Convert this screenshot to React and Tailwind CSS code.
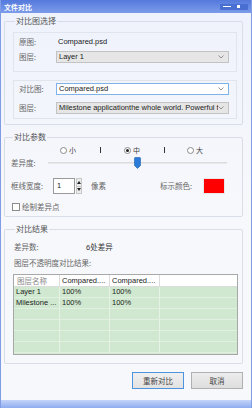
import React from 'react'

const cjk = { fontFamily: '"Noto Sans CJK SC", "Liberation Sans", sans-serif' }
const lat = { fontFamily: '"Liberation Sans", "Noto Sans CJK SC", sans-serif' }

const Chevron = () => (
    <svg width="6" height="4" viewBox="0 0 6 4" className="shrink-0">
        <path d="M0.5 0.5 L3 3 L5.5 0.5" fill="none" stroke="#7a7a7a" strokeWidth="0.8" />
    </svg>
)

const Select = ({ value, focused }) => (
    <div className={'flex-1 min-w-0 h-[12px] flex items-center pl-[2px] pr-[4px] border text-[7.5px] text-[#222] overflow-hidden ' +
        (focused ? 'bg-white border-[#7fb3e8]' : 'bg-[#e6e6e6] border-[#c3c3c3]')}
        style={lat}>
        <span className="flex-1 min-w-0 whitespace-nowrap overflow-hidden">{value}</span>
        <Chevron />
    </div>
)

const Radio = ({ checked, label }) => (
    <div className="flex items-center w-[41px]">
        <div className="w-[7px] h-[7px] rounded-full border border-[#8a8a8a] bg-white flex items-center justify-center">
            {checked && <div className="w-[3px] h-[3px] rounded-full bg-[#222]" />}
        </div>
        <span className="ml-[2px] text-[7px] leading-[10px] text-[#444]">{label}</span>
    </div>
)

const Thumb = () => (
    <svg width="7" height="12" viewBox="0 0 7 12">
        <path d="M0.5 1.3 Q0.5 0.5 1.3 0.5 H5.7 Q6.5 0.5 6.5 1.3 V8.5 L3.5 11.5 L0.5 8.5 Z" fill="#2b7bd8" stroke="#1d5fb0" strokeWidth="0.6" />
    </svg>
)

const rows = [
    ['Layer 1', '100%', '100%'],
    ['Milestone ...', '100%', '100%'],
    ['', '', ''], ['', '', ''], ['', '', ''], ['', '', ''],
]

export default function App() {
    return (
        <div className="w-[252px] h-[408px] flex flex-col overflow-hidden border-x border-[#7f9de6] bg-gradient-to-b from-[#eef2fc] via-[#f7f8fc] to-[#f7f8fc]" style={cjk}>
            {/* title bar */}
            <div className="h-[13px] shrink-0 flex items-center px-[3px] bg-gradient-to-b from-[#5479dc] to-[#7c9be9]">
                <span className="text-[7px] leading-[8px] text-white font-bold">文件对比</span>
                <div className="ml-auto flex items-center h-[6px] w-[28px] bg-[#4a6fd3] rounded-[1px] px-[3px] gap-[6px]">
                    <div className="w-[8px] h-[1px] bg-white" />
                    <div className="w-[3px] h-[3px] bg-white" />
                </div>
            </div>

            {/* 对比图选择 */}
            <fieldset className="mt-[3px] ml-[3px] w-[239px] min-w-0 border border-[#d8dde7] rounded-[2px] pl-[8px] pr-[5px] pb-[5px]">
                <legend className="ml-[2px] px-[1px] text-[8px] leading-[10px] text-[#555]">对比图选择</legend>
                <div className="mt-[6px] h-[40px] border border-[#e0e4ec] pl-[5px] pr-[7px] flex flex-col">
                    <div className="mt-[2px] h-[14px] flex items-center">
                        <span className="w-[37px] text-[7.5px] text-[#666]">原图:</span>
                        <span className="text-[7.5px] text-[#222] ml-[2px]" style={lat}>Compared.psd</span>
                    </div>
                    <div className="mt-[2px] h-[12px] flex items-center">
                        <span className="w-[37px] text-[7.5px] text-[#666]">图层:</span>
                        <Select value="Layer 1" />
                    </div>
                </div>
                <div className="mt-[8px] h-[39px] border border-[#e0e4ec] pl-[5px] pr-[7px] flex flex-col">
                    <div className="mt-[2px] h-[12px] flex items-center">
                        <span className="w-[37px] text-[7.5px] text-[#666]">对比图:</span>
                        <Select value="Compared.psd" focused />
                    </div>
                    <div className="mt-[7px] h-[12px] flex items-center">
                        <span className="w-[37px] text-[7.5px] text-[#666]">图层:</span>
                        <Select value="Milestone applicationthe whole world. Powerful f" />
                    </div>
                </div>
            </fieldset>

            {/* 对比参数 */}
            <fieldset className="mt-[7px] ml-[3px] w-[239px] min-w-0 border border-[#d8dde7] rounded-[2px] pl-[6px] pr-[15px] pb-[4px]">
                <legend className="ml-[2px] px-[1px] text-[8px] leading-[10px] text-[#555]">对比参数</legend>
                <div className="mt-[3px] h-[10px] flex items-center pl-[49px]">
                    <Radio label="小" />
                    <div className="w-[1px] h-[6px] bg-[#333] mr-[23px]" />
                    <Radio label="中" checked />
                    <div className="w-[1px] h-[6px] bg-[#333] mr-[22px]" />
                    <Radio label="大" />
                </div>
                <div className="mt-[2px] h-[12px] flex items-center">
                    <span className="w-[37px] text-[7.5px] text-[#666]">差异度:</span>
                    <div className="relative flex-1 h-[12px] flex items-center">
                        <div className="w-full h-[2px] bg-[#dcdcdc] border-b border-[#e8e8e8]" />
                        <div className="absolute left-[86px] top-0">
                            <Thumb />
                        </div>
                    </div>
                </div>
                <div className="mt-[9px] h-[16px] flex items-center">
                    <span className="w-[42px] text-[7.5px] text-[#666]">框线宽度:</span>
                    <div className="w-[22px] h-[16px] bg-white border border-[#9a9a9a] flex items-center pl-[3px] text-[7.5px] text-[#222]" style={lat}>1</div>
                    <div className="w-[6px] h-[16px] flex flex-col ml-[1px]">
                        <div className="flex-1 flex items-center justify-center bg-[#ececec] border border-[#c8c8c8]">
                            <svg width="4" height="3" viewBox="0 0 4 3"><path d="M0 3 L2 0 L4 3 Z" fill="#222" /></svg>
                        </div>
                        <div className="flex-1 flex items-center justify-center bg-[#ececec] border border-[#c8c8c8] border-t-0">
                            <svg width="4" height="3" viewBox="0 0 4 3"><path d="M0 0 L2 3 L4 0 Z" fill="#222" /></svg>
                        </div>
                    </div>
                    <span className="ml-[9px] text-[7.5px] text-[#666]">像素</span>
                    <span className="ml-[54px] w-[43px] text-[7.5px] text-[#666]">标示颜色:</span>
                    <div className="w-[22px] h-[16px] bg-[#ff0000] border border-[#e8e8e8]" />
                </div>
                <div className="mt-[8px] h-[10px] flex items-center">
                    <div className="ml-[1px] w-[8px] h-[8px] bg-white border border-[#8a8a8a]" />
                    <span className="ml-[2px] text-[7.5px] text-[#666]">绘制差异点</span>
                </div>
            </fieldset>

            {/* 对比结果 */}
            <fieldset className="mt-[7px] ml-[3px] w-[239px] min-w-0 border border-[#d8dde7] rounded-[2px] pl-[8px] pr-[4px] pb-[8px]">
                <legend className="ml-[2px] px-[1px] text-[8px] leading-[10px] text-[#555]">对比结果</legend>
                <div className="mt-[8px] h-[10px] flex items-center pl-[1px]">
                    <span className="w-[72px] text-[7.5px] text-[#666]">差异数:</span>
                    <span className="text-[7.5px] text-[#333]"><span style={lat}>6</span>处差异</span>
                </div>
                <div className="mt-[6px] h-[10px] flex items-center pl-[1px]">
                    <span className="text-[7.5px] text-[#666]">图层不透明度对比结果:</span>
                </div>
                <div className="mt-[6px] h-[81px] border border-[#a8a8a8] bg-[#cfe8cf] overflow-hidden flex flex-col" style={lat}>
                    <div className="h-[12px] shrink-0 bg-white flex text-[7.5px] text-[#222] border-b border-[#dcdcdc]">
                        <div className="w-[46px] pl-[3px] flex items-center border-r border-[#dcdcdc] text-[#888]" style={cjk}>图层名称</div>
                        <div className="w-[50px] pl-[2px] flex items-center border-r border-[#dcdcdc] whitespace-nowrap overflow-hidden">Compared....</div>
                        <div className="w-[50px] pl-[2px] flex items-center border-r border-[#dcdcdc] whitespace-nowrap overflow-hidden">Compared....</div>
                        <div className="flex-1" />
                    </div>
                    {rows.map((r, i) => (
                        <div key={i} className="h-[11px] shrink-0 flex text-[7.5px] text-[#222] border-b border-[#e2f0e2]">
                            <div className="w-[46px] pl-[2px] flex items-center border-r border-[#e6f2e6] whitespace-nowrap overflow-hidden">{r[0]}</div>
                            <div className="w-[50px] pl-[2px] flex items-center border-r border-[#e6f2e6]">{r[1]}</div>
                            <div className="w-[50px] pl-[2px] flex items-center border-r border-[#e6f2e6]">{r[2]}</div>
                            <div className="flex-1" />
                        </div>
                    ))}
                </div>
            </fieldset>

            {/* buttons */}
            <div className="mt-[8px] flex justify-end pr-[8px] gap-[7px]">
                <button className="w-[52px] h-[17px] border border-[#4e94dc] bg-gradient-to-b from-[#f0f0f0] to-[#e2e2e2] text-[7.5px] text-[#444]">重新对比</button>
                <button className="w-[52px] h-[17px] border border-[#b0b0b0] bg-gradient-to-b from-[#ececec] to-[#dedede] text-[7.5px] text-[#444]">取消</button>
            </div>

            <div className="mt-auto h-[8px] shrink-0 bg-gradient-to-b from-[#c4d4f8] to-[#8eacef]" />
        </div>
    )
}
